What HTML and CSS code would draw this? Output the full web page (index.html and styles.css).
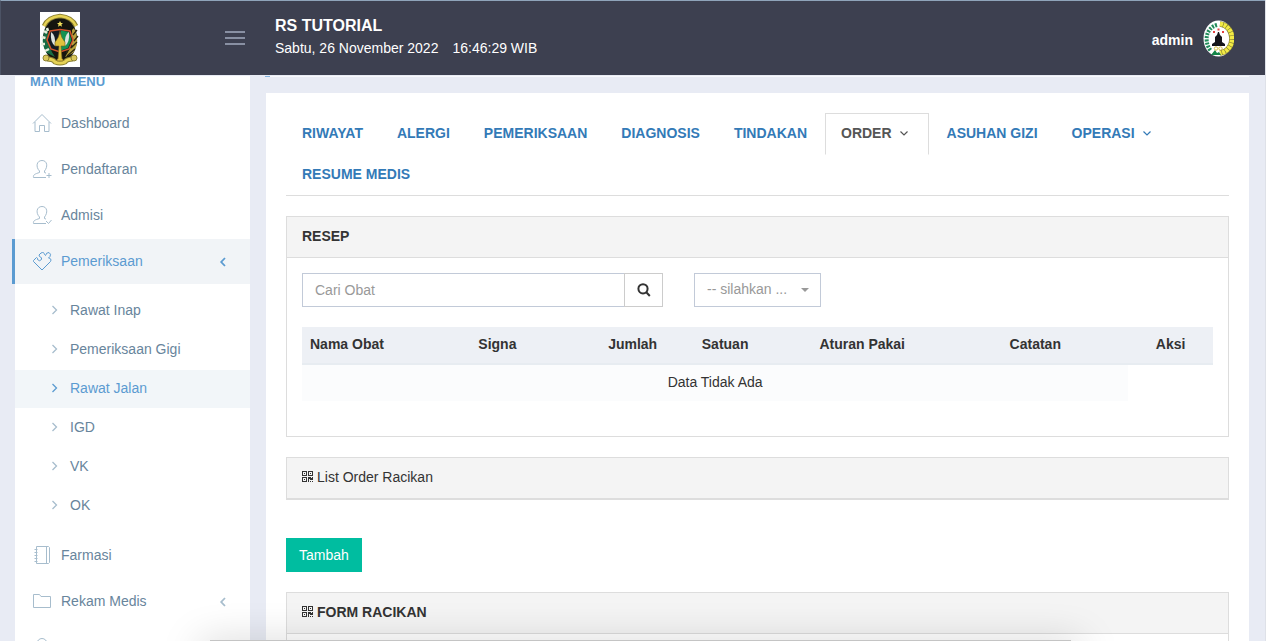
FILE: index.html
```html
<!DOCTYPE html>
<html lang="id">
<head>
<meta charset="utf-8">
<meta name="viewport" content="width=device-width, initial-scale=1">
<title>RS TUTORIAL</title>
<link rel="stylesheet" href="styles.css">
</head>
<body>
<svg class="defs" aria-hidden="true">
  <symbol id="chev-right" viewBox="0 0 8 12"><path d="M1.500 2 5.500 6l-4 4"/></symbol>
  <symbol id="chev-down" viewBox="0 0 10 7"><path d="M1.500 1.500 5 5 8.500 1.500"/></symbol>
  <symbol id="chev-left" viewBox="0 0 8 12"><path d="M6 2 2.200 6 6 10"/></symbol>
  <symbol id="qr" viewBox="0 0 12 12"><path fill="currentColor" fill-rule="evenodd" d="M0 0h5v5H0zM1 1v3h3V1zM2 2h1v1H2zM6 0h5v5H6zM7 1v3h3V1zM8 2h1v1H8zM0 6h5v5H0zM1 7v3h3V7zM2 8h1v1H2zM6 6h3v1h1V6h1v3H8V8H7v3H6zM8 10h1v1H8zM10 10h1v1h-1z"/></symbol>
</svg>

<header class="header">
  <div class="brand">
    <svg class="brand-logo" viewBox="0 0 40 55" role="img" aria-label="Logo rumah sakit">
      <rect width="40" height="55" fill="#fff"/>
      <ellipse cx="20" cy="27" rx="17" ry="23" fill="#15150f"/>
      <path d="M4 14Q8 5 20 4 32 5 36 14" fill="none" stroke="#8c8132" stroke-width="4.500"/>
      <path d="M4 14Q8 5 20 4 32 5 36 14" fill="none" stroke="#e6d255" stroke-width="2.500"/>
      <path d="M7 47q6 0 8 3 5 2 10 0 2-3 8-3" fill="none" stroke="#8c8132" stroke-width="5"/>
      <path d="M7 47q6 0 8 3 5 2 10 0 2-3 8-3" fill="none" stroke="#e6d255" stroke-width="3"/>
      <circle cx="6" cy="46" r="3" fill="#d9c65a" stroke="#8c8132"/><circle cx="34" cy="46" r="3" fill="#d9c65a" stroke="#8c8132"/>
      <path d="M6 16Q-1 30 7 41l8 4Q7 34 8 18z" fill="#176b43"/>
      <path d="M34 16q7 14-1 25l-8 4q8-11 7-27z" fill="#b7a23d"/>
      <path d="M4 19l3 2M1.500 25l4 1M1 32l4 0M5 39l4-2M7 16l1 3" stroke="#e8eedc" stroke-width="2.500"/>
      <path d="M37 18l-4 5M38 24l-4 5M37 30l-6 6M35 37l-8 7M32 33l-6 8" stroke="#2a260f" stroke-width="1.300"/>
      <path d="M10 19 20 17.500 30 19 33 28 29 37 20 40 11 37 7 28z" fill="#141c22" stroke="#d2552c" stroke-width="1.500"/>
      <path d="M21 18.500 29 20 31.500 28 28 36 21 38.500z" fill="#159252"/>
      <path d="M11 20q5 3 4 14-5-4-4-14M29 20q-5 3-4 14 5-4 4-14" fill="#dce3df"/>
      <path d="M20 19q1 7 5 11v4h-4l1 13h1v2h-6v-2h1l1-13h-4v-4q4-4 5-11" fill="#dfc23c" stroke="#765f1c" stroke-width=".6"/>
      <path d="M20 9l1 2h2l-1.600 1.500.6 2.200-2-1.200-2 1.200.6-2.200L17 11h2z" fill="#f2e15d"/>
    </svg>
    <button class="toggler" type="button" aria-label="Menu"><span></span><span></span><span></span></button>
  </div>
  <div class="title">
    <strong class="title-name">RS TUTORIAL</strong>
    <div class="title-time"><span>Sabtu, 26 November 2022</span><span>16:46:29 WIB</span></div>
  </div>
  <a class="user" href="#">
    <span>admin</span>
    <svg class="avatar" viewBox="0 0 31 37" aria-hidden="true">
      <ellipse cx="15.500" cy="18.500" rx="15" ry="18" fill="#fff"/>
      <path d="M17 4C33 6 33 31 17 33" fill="none" stroke="#777532" stroke-width="5.500"/>
      <path d="M17 4C33 6 33 31 17 33" fill="none" stroke="#f3eb45" stroke-width="4.500" stroke-dasharray="3 .6"/>
      <path d="M14 5C2 8 1 23 8 31" fill="none" stroke="#218b5b" stroke-width="4" stroke-dasharray="2 1.200"/>
      <path d="M8 35l4-5 2 3 2-1 2 3z" fill="#138447"/>
      <path d="M14 15l1-3h1l1 3 2 2v5l3 2v2H9v-2l3-2v-5z" fill="#15151b"/>
      <path d="M10 12h2M14.500 9.500h2M19 12h2" stroke="#e34343" stroke-width="1.800"/>
      <circle cx="13" cy="28.500" r="1.700" fill="none" stroke="#d4bd45"/><circle cx="17.500" cy="28.500" r="1.700" fill="none" stroke="#d4bd45"/>
    </svg>
  </a>
</header>

<div class="page">
  <nav class="sidebar" aria-label="Menu utama">
    <h2 class="menu-heading">MAIN MENU</h2>
    <ul class="menu">
      <li><a class="item" href="#"><svg class="icon" viewBox="0 0 20 20"><path d="M1 10.500 10 1.500l9 9M3 9v9.500h4.500v-6h5v6H17V9"/></svg>Dashboard</a></li>
      <li><a class="item" href="#"><svg class="icon" viewBox="0 0 20 20"><path d="M14 18.500H1.500C1 15.500 3 15 7.500 13.500V12C3.500 8 4.500 1.500 10 1.500S16 8 12.500 12v1.500l1.500.6M17 14v5M14.500 16.500h5"/></svg>Pendaftaran</a></li>
      <li><a class="item" href="#"><svg class="icon" viewBox="0 0 20 20"><path d="M14 18.500H1.500C1 15.500 3 15 7.500 13.500V12C3.500 8 4.500 1.500 10 1.500S16 8 12.500 12v1.500l1.500.6M14 16l2.500 2.500 3-3.500"/></svg>Admisi</a></li>
      <li>
        <a class="item item-open" href="#"><svg class="icon" viewBox="0 0 20 20"><path d="M10 19 1.500 10.500V9.500L4.500 6.500Q6 7 5.500 8.500 7.500 11 9.500 8.500 10.500 6.500 7.500 5.500L7 4 9 2Q12 .500 12.500 3.500L13.500 4.500Q14 1.500 17 1.500 19.500 3 18 5.500L16.500 7Q20 7.500 18.500 10.500Z"/></svg>Pemeriksaan<svg class="arrow"><use href="#chev-left"/></svg></a>
        <ul class="submenu">
          <li><a class="sub" href="#"><svg class="bullet"><use href="#chev-right"/></svg>Rawat Inap</a></li>
          <li><a class="sub" href="#"><svg class="bullet"><use href="#chev-right"/></svg>Pemeriksaan Gigi</a></li>
          <li><a class="sub sub-current" href="#" aria-current="page"><svg class="bullet"><use href="#chev-right"/></svg>Rawat Jalan</a></li>
          <li><a class="sub" href="#"><svg class="bullet"><use href="#chev-right"/></svg>IGD</a></li>
          <li><a class="sub" href="#"><svg class="bullet"><use href="#chev-right"/></svg>VK</a></li>
          <li><a class="sub" href="#"><svg class="bullet"><use href="#chev-right"/></svg>OK</a></li>
        </ul>
      </li>
      <li><a class="item" href="#"><svg class="icon" viewBox="0 0 20 20"><path d="M4.500 1.500h12l1 1v15l-1 1h-12zM14.500 1.500v17M2.500 4.500h3M2.500 7.500h3M2.500 10.500h3M2.500 13.500h3M2.500 16.500h3"/></svg>Farmasi</a></li>
      <li><a class="item" href="#"><svg class="icon" viewBox="0 0 20 20"><path d="M1.500 16.500v-13h6l1.500 2h9.500v11z"/></svg>Rekam Medis<svg class="arrow"><use href="#chev-left"/></svg></a></li>
      <li><a class="item" href="#" aria-label="Profil"><svg class="icon" viewBox="0 0 20 20"><circle cx="10" cy="6.500" r="5"/><path d="M1.500 18.500q1-6 8.500-6t8.500 6z"/></svg></a></li>
    </ul>
  </nav>

  <main class="content">
    <div class="crumb-edge"></div>
    <div class="card">
      <ul class="tabs">
        <li><a class="tab" href="#">RIWAYAT</a></li>
        <li><a class="tab" href="#">ALERGI</a></li>
        <li><a class="tab" href="#">PEMERIKSAAN</a></li>
        <li><a class="tab" href="#">DIAGNOSIS</a></li>
        <li><a class="tab" href="#">TINDAKAN</a></li>
        <li><a class="tab tab-active" href="#">ORDER<svg class="caret"><use href="#chev-down"/></svg></a></li>
        <li><a class="tab" href="#">ASUHAN GIZI</a></li>
        <li><a class="tab" href="#">OPERASI<svg class="caret"><use href="#chev-down"/></svg></a></li>
        <li><a class="tab" href="#">RESUME MEDIS</a></li>
      </ul>

      <section class="panel">
        <h3 class="panel-head">RESEP</h3>
        <div class="panel-body">
          <form class="filters">
            <div class="search">
              <input class="search-input" type="text" placeholder="Cari Obat" aria-label="Cari Obat">
              <button class="search-button" type="button" aria-label="Cari"><svg viewBox="0 0 14 14"><circle cx="6" cy="5.800" r="4.600"/><path d="m9.300 9.300 3.500 3.700"/></svg></button>
            </div>
            <div class="picker">
              <select class="picker-select" aria-label="Pilihan"><option>-- silahkan ...</option></select>
            </div>
          </form>
          <table class="meds">
            <colgroup><col class="c-name"><col class="c-signa"><col class="c-qty"><col class="c-unit"><col class="c-rule"><col class="c-note"><col class="c-act"></colgroup>
            <thead><tr><th class="left">Nama Obat</th><th>Signa</th><th>Jumlah</th><th>Satuan</th><th>Aturan Pakai</th><th>Catatan</th><th>Aksi</th></tr></thead>
            <tbody><tr><td colspan="6">Data Tidak Ada</td></tr></tbody>
          </table>
        </div>
      </section>

      <section class="panel panel-collapsed">
        <h3 class="panel-head panel-head-plain"><svg class="qr"><use href="#qr"/></svg>List Order Racikan</h3>
      </section>

      <button class="add" type="button">Tambah</button>

      <section class="panel">
        <h3 class="panel-head"><svg class="qr"><use href="#qr"/></svg>FORM RACIKAN</h3>
        <div class="panel-body"></div>
      </section>
    </div>
  </main>
</div>
<div class="dock-shadow"></div>
</body>
</html>
```

FILE: styles.css
```css
* { box-sizing: border-box; }

body {
  margin: 0;
  height: 100vh;
  overflow: hidden;
  display: flex;
  flex-direction: column;
  border-right: 1px solid #dee1e8;
  background: #e8ebf4;
  color: #333;
  font: 14px/20px "Liberation Sans", Arial, sans-serif;
}

ul { list-style: none; margin: 0; padding: 0; }
h2, h3 { margin: 0; font-size: 14px; }
a { text-decoration: none; color: inherit; }
button, input, select { font: inherit; border-radius: 0; }
svg { fill: none; stroke: currentColor; flex: none; }
.defs { position: absolute; width: 0; height: 0; }

.header {
  flex: none;
  height: 75px;
  display: flex;
  border-top: 1px solid #8fa4ba;
  border-left: 1px solid #4c5365;
  background: #3d4050;
  color: #fff;
}
.brand {
  width: 244px;
  display: flex;
  justify-content: space-between;
  align-items: flex-start;
  padding: 11px 0 0 39px;
}
.brand-logo { width: 40px; height: 55px; stroke: none; }
.toggler {
  display: flex;
  flex-direction: column;
  gap: 4px;
  margin-top: 19px;
  padding: 0;
  border: 0;
  background: none;
}
.toggler span { width: 20px; height: 2px; background: #8990a3; }
.title { flex: 1; padding: 15px 0 0 30px; }
.title-name { display: block; font-size: 16px; line-height: 20px; }
.title-time { display: flex; gap: 14px; line-height: 24px; }
.user {
  display: flex;
  align-items: center;
  gap: 10px;
  padding: 0 31px 0 0;
  font-weight: bold;
}
.user span { padding-top: 4px; }
.avatar { width: 31px; height: 37px; stroke: none; }

.page {
  flex: 1;
  min-height: 0;
  display: flex;
  gap: 16px;
  padding: 1px 16px 0 15px;
}
.sidebar {
  flex: none;
  align-self: flex-start;
  width: 235px;
  min-height: 100%;
  background: #fff;
  color: #68859c;
}
.menu-heading {
  padding: 0 15px 13px;
  color: #5b9bd1;
  font-size: 13px;
  line-height: 12px;
}
.menu > li { margin-bottom: 1px; }
.item {
  display: flex;
  align-items: center;
  height: 45px;
  padding: 0 23px 2px 17px;
}
.icon { width: 20px; height: 20px; margin-right: 9px; color: #a7bdcd; }
.arrow { width: 8px; height: 12px; margin: 2px 0 0 auto; color: #a7bdcd; stroke-width: 1.8; }
.item-open {
  margin-left: -3px;
  border-left: 3px solid #5b9bd1;
  background: #f1f4f7;
  color: #5b9bd1;
}
.item-open svg { color: #5b9bd1; }
.submenu { padding: 8px 0 6px; }
.submenu li { margin-bottom: 1px; }
.sub {
  display: flex;
  align-items: center;
  height: 38px;
  padding: 0 0 2px 36px;
}
.bullet { width: 8px; height: 12px; margin-right: 11px; color: #a7bdcd; stroke-width: 1.3; }
.sub-current { background: #f2f6f9; }
.sub-current, .sub-current .bullet { color: #5b9bd1; }

.content { flex: 1; min-width: 0; }
.crumb-edge {
  height: 1px;
  margin: 0 0 16px -1px;
  border-left: 5px solid #84b3df;
  background: #f7f8fc;
}
.card { padding: 20px; background: #fff; }
.tabs {
  display: flex;
  flex-wrap: wrap;
  margin-bottom: 20px;
  border-bottom: 1px solid #ddd;
}
.tabs li { margin: 0 2px -1px 0; }
.tab {
  display: flex;
  align-items: center;
  padding: 9px 15px 11px;
  border: 1px solid transparent;
  color: #337ab7;
  font-weight: bold;
}
.tab-active { border-color: #ddd #ddd #fff; background: #fff; color: #555; }
.caret { width: 10px; height: 7px; margin: 1px 4px 0 7px; stroke-width: 1.2; }

.panel { margin-bottom: 20px; border: 1px solid #ddd; }
.panel-head {
  display: flex;
  align-items: center;
  padding: 9px 15px 11px;
  border-bottom: 1px solid #ddd;
  background: #f4f4f4;
}
.panel-head-plain { font-weight: normal; }
.qr { width: 12px; height: 12px; margin-right: 3px; stroke: none; }
.panel-body { padding: 15px 15px 35px; }
.panel-collapsed { margin-bottom: 38px; }

.filters { display: flex; gap: 31px; margin-bottom: 20px; }
.search { display: flex; width: 361px; height: 34px; }
.search-input {
  flex: 1;
  min-width: 0;
  padding: 0 12px;
  border: 1px solid #c2cad8;
  border-right: 0;
  background: #fff;
}
.search-input::placeholder { color: #999; }
.search-button {
  width: 39px;
  padding: 0;
  border: 1px solid #ccc;
  background: #fff;
  color: #333;
}
.search-button svg { width: 14px; height: 14px; display: block; margin: 0 auto; stroke-width: 2; }
.picker { position: relative; width: 127px; }
.picker::after {
  content: "";
  position: absolute;
  right: 12px;
  top: 15px;
  border: 4px solid transparent;
  border-top-color: #999;
  border-bottom: 0;
}
.picker-select {
  appearance: none;
  width: 100%;
  height: 34px;
  padding: 0 28px 2px 12px;
  border: 1px solid #c2cad8;
  background: #fff;
  color: #999;
}

.meds { width: 100%; table-layout: fixed; border-collapse: collapse; text-align: center; }
.meds th { padding: 7px 0 9px; border-bottom: 2px solid #e7ecf1; background: #edf0f5; line-height: 20px; white-space: nowrap; }
.meds .left { padding-left: 8px; text-align: left; }
.meds td { padding: 7px 8px 9px; background: #fbfcfd; }
.c-name { width: 10.5%; }
.c-signa { width: 21.9%; }
.c-qty { width: 7.8%; }
.c-unit { width: 12.5%; }
.c-rule { width: 17.6%; }
.c-note { width: 20.4%; }
.c-act { width: 9.3%; }

.add {
  display: block;
  height: 34px;
  margin-bottom: 20px;
  padding: 0 13px;
  border: 0;
  background: #00bda0;
  color: #fff;
}

.dock-shadow {
  position: fixed;
  left: 210px;
  right: 195px;
  bottom: 0;
  height: 1px;
  background: #c4c4c4;
  box-shadow: 0 14px 40px 10px rgba(0, 0, 0, .22);
  pointer-events: none;
}
```
